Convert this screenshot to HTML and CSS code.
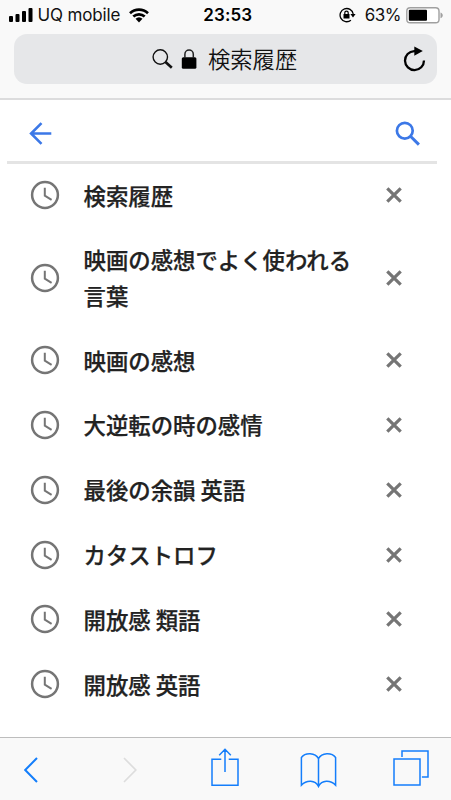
FILE: index.html
```html
<!DOCTYPE html>
<html lang="ja">
<head>
<meta charset="utf-8">
<meta name="viewport" content="width=device-width, initial-scale=1">
<title>検索履歴</title>
<link rel="stylesheet" href="styles.css">
</head>
<body>
<svg class="defs" width="0" height="0">
  <symbol id="clock" viewBox="0 0 30 30"><circle cx="15" cy="15" r="12.9" fill="none" stroke="currentColor" stroke-width="2.5"/><path d="M14.8 7.8v7.9l6.8 4.1" fill="none" stroke="currentColor" stroke-width="2"/></symbol>
  <symbol id="cross" viewBox="0 0 16 16"><path d="M1.3 1.3l13.4 13.4M14.7 1.3L1.3 14.7" fill="none" stroke="currentColor" stroke-width="3.2"/></symbol>
</svg>
<header class="chrome">
  <div class="status">
    <div class="status-left">
      <svg class="signal" width="24" height="14" viewBox="0 0 24 14"><rect x="0" y="8" width="4" height="6" rx="1"/><rect x="6.5" y="6" width="4" height="8" rx="1"/><rect x="13" y="3" width="4" height="11" rx="1"/><rect x="19.5" y="0" width="4" height="14" rx="1"/></svg>
      <span class="carrier">UQ mobile</span>
      <svg class="wifi" width="20" height="15" viewBox="0 0 20 15"><path d="M1 5.2a13.2 13.2 0 0 1 18 0M4.3 8.6a8.4 8.4 0 0 1 11.4 0" fill="none" stroke="#000" stroke-width="2.7"/><path d="M6.5 10.8a5.2 5.2 0 0 1 7 0L10 14.4z"/></svg>
    </div>
    <span class="time">23:53</span>
    <div class="status-right">
      <svg width="17" height="16" viewBox="0 0 17 16"><path d="M11.9 13.2A6.6 6.6 0 1 1 14.2 7" fill="none" stroke="#000" stroke-width="1.3"/><path d="M11.4 7h5.2L14 10.4zM4.5 7h6v4.6h-6z"/><path d="M5.8 7.2V5.8a1.7 1.7 0 0 1 3.4 0v1.4" fill="none" stroke="#000" stroke-width="1.2"/></svg>
      <span class="percent">63%</span>
      <svg width="38" height="17" viewBox="0 0 38 17"><rect x=".8" y=".8" width="32.2" height="15" rx="3.4" fill="#fff" stroke="#a0a0a0" stroke-width="1.4"/><rect x="2.8" y="2.8" width="18.2" height="11" rx="1"/><path d="M34.5 5.4c3 1 3 4.8 0 5.8z" fill="#a0a0a0"/></svg>
    </div>
  </div>
  <div class="address">
    <svg class="lens" width="22" height="20" viewBox="0 0 22 20"><circle cx="8.3" cy="8" r="7.2" fill="none" stroke="#111" stroke-width="1.4"/><path d="M13.5 13l6.3 5.8" stroke="#111" stroke-width="2.6"/></svg>
    <svg class="lock" width="16" height="20" viewBox="0 0 16 20"><rect x=".8" y="8.3" width="14.6" height="11.5" rx="1.5"/><path d="M3.9 9V5.2a4.2 4.2 0 0 1 8.4 0V9" fill="none" stroke="#222" stroke-width="1.5"/></svg>
    <span class="address-text">検索履歴</span>
    <svg class="reload" width="23" height="26" viewBox="0 0 23 26"><path d="M14.5 5.1h-3.3a9.5 9.5 0 1 0 9.8 9.5" fill="none" stroke="#000" stroke-width="2.3"/><path d="M11.3.4l8.5 4.7-8.5 4.7z"/></svg>
  </div>
</header>
<main>
  <div class="search">
    <svg width="23" height="23" viewBox="0 0 23 23" fill="none" stroke="#3c78e7" stroke-width="2.6"><path d="M22.3 11.5H2M12.5 1.2L2.1 11.5l10.4 10.3"/></svg>
    <svg width="26" height="26" viewBox="0 0 26 26" fill="none" stroke="#3c78e7"><circle cx="9.8" cy="9.7" r="7.9" stroke-width="2.7"/><path d="M15.5 15.3l8.4 8.3" stroke-width="3"/></svg>
  </div>
  <ul class="history">
    <li><svg class="clock"><use href="#clock"/></svg><span>検索履歴</span><svg class="cross"><use href="#cross"/></svg></li>
    <li><svg class="clock"><use href="#clock"/></svg><span>映画の感想でよく使われる言葉</span><svg class="cross"><use href="#cross"/></svg></li>
    <li><svg class="clock"><use href="#clock"/></svg><span>映画の感想</span><svg class="cross"><use href="#cross"/></svg></li>
    <li><svg class="clock"><use href="#clock"/></svg><span>大逆転の時の感情</span><svg class="cross"><use href="#cross"/></svg></li>
    <li><svg class="clock"><use href="#clock"/></svg><span>最後の余韻 英語</span><svg class="cross"><use href="#cross"/></svg></li>
    <li><svg class="clock"><use href="#clock"/></svg><span>カタストロフ</span><svg class="cross"><use href="#cross"/></svg></li>
    <li><svg class="clock"><use href="#clock"/></svg><span>開放感 類語</span><svg class="cross"><use href="#cross"/></svg></li>
    <li><svg class="clock"><use href="#clock"/></svg><span>開放感 英語</span><svg class="cross"><use href="#cross"/></svg></li>
  </ul>
</main>
<nav class="toolbar">
  <svg width="14" height="26" viewBox="0 0 14 26"><path d="M13 1L1.2 13 13 25" stroke-width="2"/></svg>
  <svg class="forward" width="14" height="26" viewBox="0 0 14 26"><path d="M1 1l11.8 12L1 25" stroke-width="1.7"/></svg>
  <svg class="share" width="28" height="38" viewBox="0 0 28 38"><path d="M10.3 11.3H1v25.9h26V11.3h-9.3M14 24V1.5M8.2 7.3L14 1.3l5.8 6"/></svg>
  <svg class="book" width="37" height="36" viewBox="0 0 37 36"><path d="M18.5 34.5V6.7C15.2.3 5.2.3 1.4 5.5v27.7c5.3-5.4 13.8-5.4 17.1 1.3 3.3-6.7 11.8-6.7 17.1-1.3V5.5c-3.8-5.2-13.8-5.2-17.1 1.2"/></svg>
  <svg class="tabs" width="36" height="36" viewBox="0 0 36 36"><path d="M1 9h26v26H1zM9 7.1V1h26v26h-6.1"/></svg>
</nav>
</body>
</html>
```
FILE: styles.css
```css
* { box-sizing: border-box; }
body {
  margin: 0;
  height: 800px;
  display: flex;
  flex-direction: column;
  overflow: hidden;
  background: #fff;
  font-family: Inter, "Noto Sans CJK JP", sans-serif;
  color: #000;
}
svg { display: block; flex: none; }
.defs { display: none; }
.chrome {
  height: 100px;
  flex: none;
  background: #f9f9f9;
  border-bottom: 2px solid #dcdcdd;
}
.status {
  height: 34px;
  padding: 0 7px 4px 8.5px;
  display: grid;
  grid-template-columns: 1fr auto 1fr;
  align-items: center;
  line-height: 22px;
}
.status-left, .status-right { display: flex; align-items: center; }
.status-right { justify-content: flex-end; }
.signal { margin-right: 5px; }
.carrier { font-size: 17px; letter-spacing: -.15px; color: #111; }
.wifi { margin-left: 9px; }
.time { font-size: 17px; font-weight: 600; letter-spacing: .1px; margin-left: 3px; }
.percent { font-size: 17px; letter-spacing: -.5px; margin: 0 5px 0 9px; color: #111; }
.address {
  height: 50px;
  margin: 0 14px 0 13.5px;
  padding: 0 11px 0 138.5px;
  border-radius: 13px;
  background: #e6e7e9;
  display: flex;
  align-items: center;
}
.lock { margin-left: 7px; }
.address-text {
  margin: -2px 0 0 11px;
  font: 350 22.3px/32px "Noto Sans CJK JP", sans-serif;
  color: #111;
}
.reload { margin-left: auto; }
main { flex: 1; }
.search {
  height: 64px;
  margin: 0 14px 0 7px;
  padding: 6px 16px 0 22px;
  border-bottom: 3px solid #e4e4e4;
  display: flex;
  justify-content: space-between;
  align-items: center;
}
.history {
  list-style: none;
  margin: -1px 0 0;
  padding: 0 49px 0 30px;
}
.history li {
  padding: 14.7px 0;
  display: flex;
  align-items: center;
  color: #757575;
}
.history span {
  width: 280px;
  margin: 0 auto 0 23.5px;
  font: 500 22.4px/35.4px "Noto Sans CJK JP", sans-serif;
  -webkit-text-stroke: .25px #222;
  color: #222;
}
.clock { width: 30px; height: 30px; }
.cross { width: 16px; height: 16px; }
.toolbar {
  height: 63px;
  flex: none;
  padding: 2px 22px 0 23.5px;
  background: #f9f9f9;
  border-top: 1px solid #bdbdbd;
  display: flex;
  align-items: center;
  fill: none;
  stroke: #147efb;
  stroke-width: 1.5;
}
.forward { margin-left: 85px; stroke: #ddd; }
.share { margin: -6px 0 0 74px; }
.book { margin-left: 61px; }
.tabs { margin: -4px 0 0 auto; }
```
